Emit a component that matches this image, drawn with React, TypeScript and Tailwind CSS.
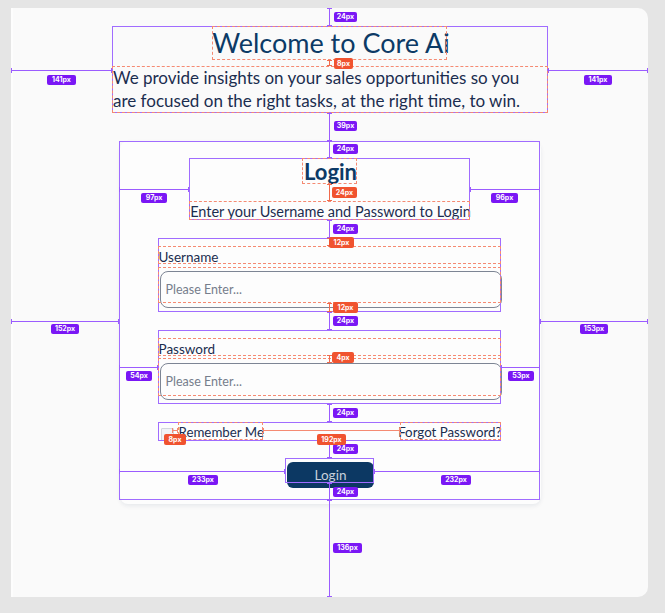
import React from "react";

const P = ({ c, t }: { c: string; t: string }) => (
  <div
    className={`absolute h-[10px] rounded-[2px] bg-[#7a17f5] text-white text-[7px] font-bold leading-[10px] text-center font-['Inter',sans-serif] ${c}`}
  >
    {t}
  </div>
);

const R = ({ c, t }: { c: string; t: string }) => (
  <div
    className={`absolute h-[11px] rounded-[2px] bg-[#f0532f] text-white text-[7px] font-bold leading-[11px] text-center font-['Inter',sans-serif] ${c}`}
  >
    {t}
  </div>
);

const Box = ({ c }: { c: string }) => (
  <div className={`absolute border border-[#a06cff] ${c}`} />
);

const Dash = ({ c }: { c: string }) => (
  <div className={`absolute border border-dashed border-[#f58a72] ${c}`} />
);

const VL = ({ c, red }: { c: string; red?: boolean }) => (
  <div className={`absolute w-px ${red ? "bg-[#f06a4c]" : "bg-[#9b5cff]"} ${c}`}>
    <div className={`absolute left-[-2px] top-0 w-[5px] h-px ${red ? "bg-[#f06a4c]" : "bg-[#9b5cff]"}`} />
    <div className={`absolute left-[-2px] bottom-0 w-[5px] h-px ${red ? "bg-[#f06a4c]" : "bg-[#9b5cff]"}`} />
  </div>
);

const HL = ({ c, red }: { c: string; red?: boolean }) => (
  <div className={`absolute h-px ${red ? "bg-[#f58a72]" : "bg-[#9b5cff]"} ${c}`}>
    <div className={`absolute top-[-2px] left-0 h-[5px] w-px ${red ? "bg-[#f58a72]" : "bg-[#9b5cff]"}`} />
    <div className={`absolute top-[-2px] right-0 h-[5px] w-px ${red ? "bg-[#f58a72]" : "bg-[#9b5cff]"}`} />
  </div>
);

export default function App() {
  return (
    <div className="relative w-[665px] h-[613px] bg-[#e5e5e5] overflow-hidden pt-[8px] pl-[11px] font-['Lato',sans-serif]">
      {/* Page card */}
      <div className="w-[637px] h-[589px] bg-[#fafafa] rounded-r-[10px] border-l-2 border-[#fdfdfd] flex flex-col items-center pt-[18px]">
        {/* Header */}
        <div className="w-[436px] flex flex-col items-center gap-[6px] ml-[1px]">
          <h1 className="h-[34px] text-[27px] leading-[34px] text-[#0c3a66] whitespace-nowrap">
            Welcome to Core Ai
          </h1>
          <p className="w-full h-[47px] text-[17px] leading-[23px] text-[#1b2d4f] whitespace-nowrap">
            We provide insights on your sales opportunities so you
            <br />
            are focused on the right tasks, at the right time, to win.
          </p>
        </div>

        {/* Login card */}
        <div className="mt-[28px] w-[421px] h-[363px] bg-[#fdfdfd] rounded-[8px] shadow-[0_2px_4px_rgba(15,40,80,0.08)] flex flex-col items-center pt-[17px]">
          <div className="w-[281px] flex flex-col items-center">
            <h2 className="h-[26px] text-[22px] leading-[27px] font-bold text-[#0c3a66]">Login</h2>
            <p className="mt-[17px] h-[19px] text-[14.5px] leading-[21px] text-[#1b2d4f] whitespace-nowrap">
              Enter your Username and Password to Login
            </p>
          </div>

          <div className="mt-[18px] w-[342px] pt-[8px] pb-[4px] flex flex-col">
            <label className="h-[17px] -ml-[1px] text-[13.5px] leading-[22px] text-[#1b2d4f]">Username</label>
            <input
              className="mt-[8px] h-[37px] w-full rounded-[8px] border border-[#7d8594] px-[5px] text-[12.5px] bg-transparent placeholder:text-[#767e8c] outline-none"
              placeholder="Please Enter..."
            />
          </div>

          <div className="mt-[18px] w-[342px] pt-[8px] pb-[4px] flex flex-col">
            <label className="h-[17px] -ml-[1px] text-[13.5px] leading-[22px] text-[#1b2d4f]">Password</label>
            <input
              className="mt-[8px] h-[37px] w-full rounded-[8px] border border-[#7d8594] px-[5px] text-[12.5px] bg-transparent placeholder:text-[#767e8c] outline-none"
              placeholder="Please Enter..."
            />
          </div>

          <div className="mt-[18px] w-[342px] h-[19px] flex items-end justify-between">
            <div className="flex items-end gap-[5px] pl-[1px]">
              <div className="w-[13px] h-[13px] border border-[#d3d7de] bg-[#f1f3f6] rounded-[1px]" />
              <span className="text-[13.3px] leading-[17px] text-[#1b2d4f]">Remember Me</span>
            </div>
            <span className="text-[13.3px] leading-[17px] text-[#1b2d4f]">Forgot Password?</span>
          </div>

          <button className="mt-[21px] w-[87px] h-[26px] rounded-[6px] bg-[#0c3863] text-[#c8d0db] text-[13.5px] leading-[26px]">
            Login
          </button>
        </div>
      </div>

      {/* Overlay */}
      <div className="absolute inset-0 pointer-events-none">
        <Box c="left-[112px] top-[26px] w-[436px] h-[87px]" />
        <Box c="left-[119px] top-[141px] w-[421px] h-[359px]" />
        <Box c="left-[189px] top-[158px] w-[281px] h-[62px]" />
        <Box c="left-[158px] top-[238px] w-[343px] h-[74px]" />
        <Box c="left-[158px] top-[330px] w-[343px] h-[74px]" />
        <Box c="left-[158px] top-[422px] w-[343px] h-[19px]" />
        <Box c="left-[285px] top-[458px] w-[89px] h-[25px]" />

        <Dash c="left-[212px] top-[26px] w-[235px] h-[34px]" />
        <Dash c="left-[112px] top-[66px] w-[436px] h-[47px]" />
        <Dash c="left-[302px] top-[158px] w-[55px] h-[26px]" />
        <Dash c="left-[189px] top-[201px] w-[281px] h-[19px]" />
        <Dash c="left-[158px] top-[246px] w-[343px] h-[18px]" />
        <Dash c="left-[158px] top-[267px] w-[343px] h-[36px]" />
        <Dash c="left-[158px] top-[338px] w-[343px] h-[18px]" />
        <Dash c="left-[158px] top-[358px] w-[343px] h-[38px]" />
        <Dash c="left-[178px] top-[422px] w-[85px] h-[18px]" />
        <Dash c="left-[400px] top-[422px] w-[101px] h-[18px]" />

        <HL red c="left-[263px] top-[430px] w-[137px]" />
        <HL red c="left-[172px] top-[430px] w-[6px]" />

        <VL red c="left-[329px] top-[60px] h-[6px]" />
        <VL red c="left-[329px] top-[184px] h-[17px]" />
        <VL red c="left-[329px] top-[238px] h-[8px]" />
        <VL red c="left-[329px] top-[303px] h-[9px]" />
        <VL red c="left-[329px] top-[355px] h-[8px]" />

        <VL c="left-[329px] top-[8px] h-[18px]" />
        <VL c="left-[329px] top-[113px] h-[28px]" />
        <VL c="left-[329px] top-[141px] h-[17px]" />
        <VL c="left-[329px] top-[220px] h-[18px]" />
        <VL c="left-[329px] top-[312px] h-[18px]" />
        <VL c="left-[329px] top-[404px] h-[18px]" />
        <VL c="left-[329px] top-[441px] h-[17px]" />
        <VL c="left-[329px] top-[483px] h-[17px]" />
        <VL c="left-[329px] top-[500px] h-[97px]" />

        <HL c="left-[11px] top-[70px] w-[101px]" />
        <HL c="left-[548px] top-[70px] w-[100px]" />
        <HL c="left-[119px] top-[189px] w-[70px]" />
        <HL c="left-[470px] top-[189px] w-[70px]" />
        <HL c="left-[11px] top-[321px] w-[108px]" />
        <HL c="left-[540px] top-[321px] w-[108px]" />
        <HL c="left-[119px] top-[367px] w-[39px]" />
        <HL c="left-[501px] top-[367px] w-[39px]" />
        <HL c="left-[119px] top-[471px] w-[166px]" />
        <HL c="left-[374px] top-[471px] w-[166px]" />

        <P t="24px" c="left-[334px] top-[12px] w-[23px]" />
        <P t="141px" c="left-[47px] top-[75px] w-[29px]" />
        <P t="141px" c="left-[584px] top-[75px] w-[28px]" />
        <P t="39px" c="left-[334px] top-[121px] w-[23px]" />
        <P t="24px" c="left-[333px] top-[144px] w-[25px]" />
        <P t="97px" c="left-[141px] top-[193px] w-[26px]" />
        <P t="96px" c="left-[491px] top-[193px] w-[27px]" />
        <P t="24px" c="left-[333px] top-[224px] w-[25px]" />
        <P t="24px" c="left-[333px] top-[316px] w-[25px]" />
        <P t="152px" c="left-[51px] top-[324px] w-[28px]" />
        <P t="153px" c="left-[580px] top-[324px] w-[28px]" />
        <P t="54px" c="left-[126px] top-[371px] w-[26px]" />
        <P t="53px" c="left-[508px] top-[371px] w-[26px]" />
        <P t="24px" c="left-[333px] top-[408px] w-[25px]" />
        <P t="24px" c="left-[333px] top-[444px] w-[25px]" />
        <P t="233px" c="left-[188px] top-[475px] w-[30px]" />
        <P t="232px" c="left-[441px] top-[475px] w-[30px]" />
        <P t="24px" c="left-[333px] top-[487px] w-[25px]" />
        <P t="136px" c="left-[333px] top-[543px] w-[29px]" />

        <R t="8px" c="left-[334px] top-[58px] w-[19px]" />
        <R t="24px" c="left-[332px] top-[187px] w-[25px]" />
        <R t="12px" c="left-[329px] top-[237px] w-[25px]" />
        <R t="12px" c="left-[333px] top-[302px] w-[25px]" />
        <R t="4px" c="left-[332px] top-[352px] w-[22px]" />
        <R t="8px" c="left-[164px] top-[434px] w-[22px]" />
        <R t="192px" c="left-[317px] top-[434px] w-[29px]" />
      </div>
    </div>
  );
}
